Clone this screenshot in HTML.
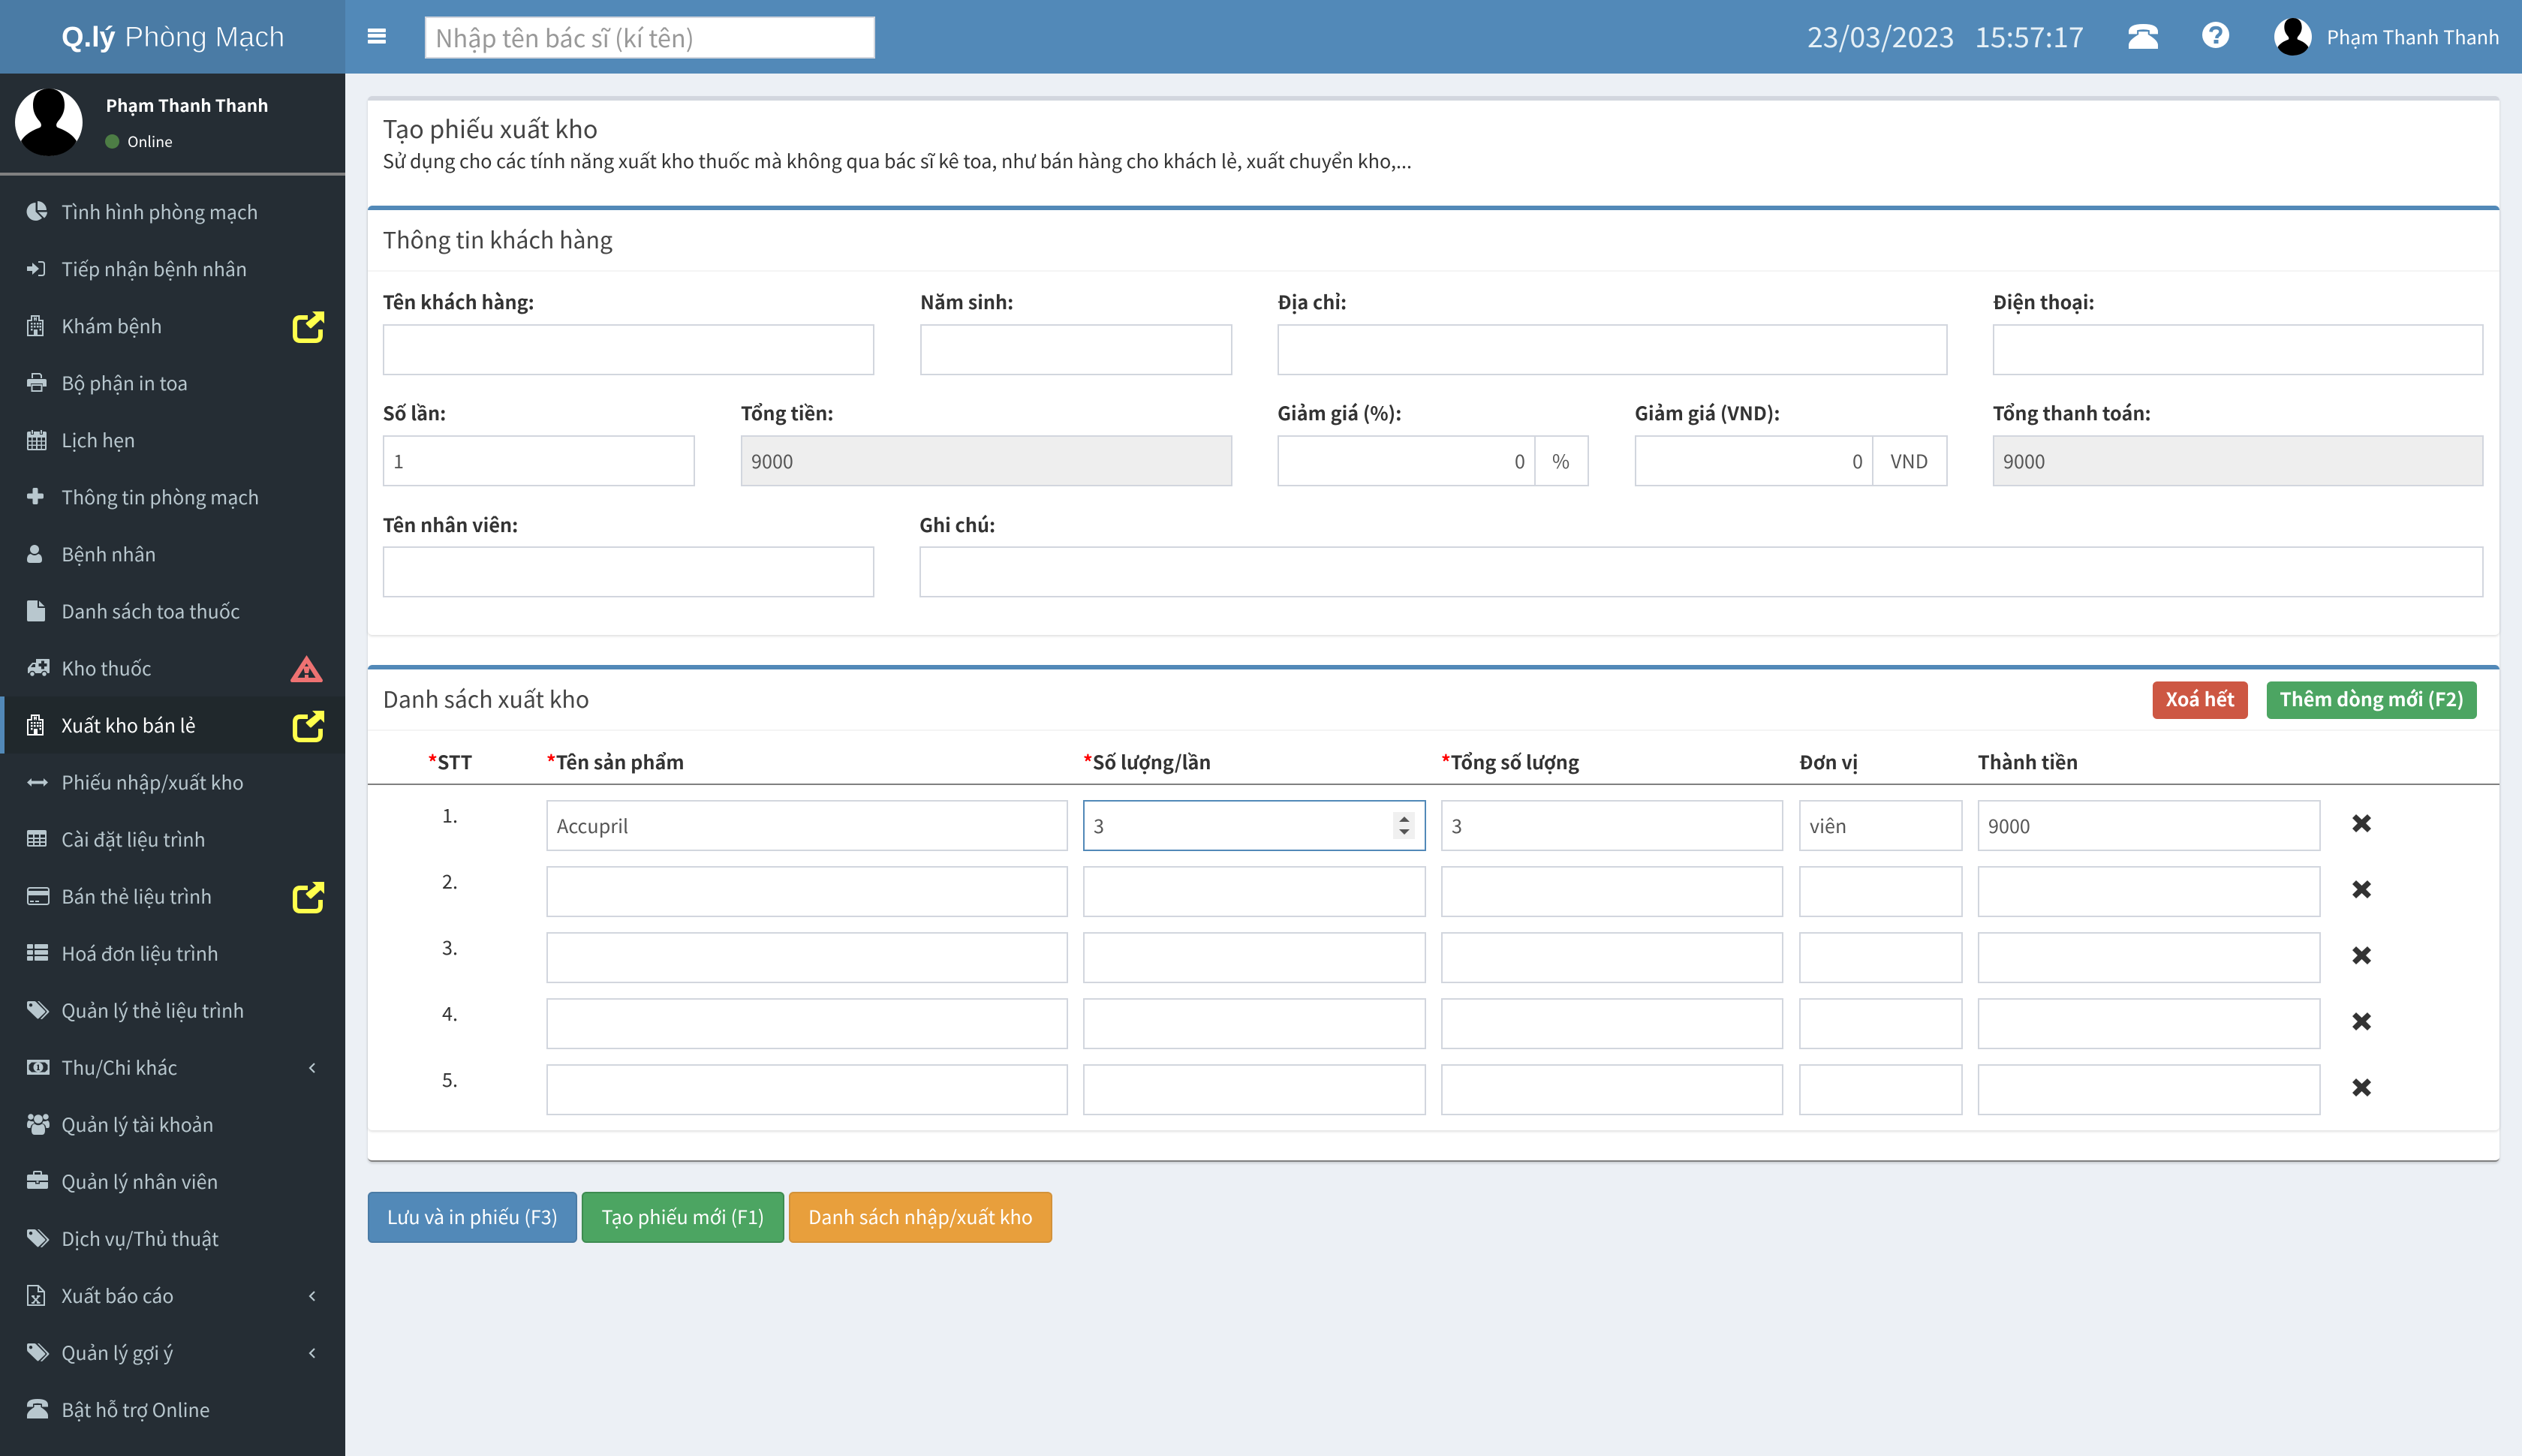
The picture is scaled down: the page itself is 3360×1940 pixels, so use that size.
<!DOCTYPE html>
<html lang="vi"><head><meta charset="utf-8"><title>Tạo phiếu xuất kho</title>
<style>
*{box-sizing:border-box}
html,body{margin:0;padding:0}
body{position:relative;width:3360px;height:1940px;overflow:hidden;background:#ecf0f5;font-family:"Noto Sans CJK SC","Noto Sans CJK JP","Liberation Sans",sans-serif;font-size:25.2px;color:#333}
.a,.t,.m,.in,.i,.btn{position:absolute}
.t{white-space:nowrap;line-height:0;height:0}
.m{left:82px;height:76px;line-height:76px;font-size:25px;color:#b8c7ce;white-space:nowrap}
.i{display:block;color:#b8c7ce;fill:currentColor;overflow:visible}
.in{height:68px;border:2px solid #d2d6de;background:#fff;color:#555;line-height:64px;padding:0 12px;white-space:nowrap}
.dis{background:#eee}
.lb{font-weight:700;color:#333;font-size:25.2px}
.h{font-size:32.5px;color:#444}
.h2{font-size:30.3px;color:#444}
.btn{border-radius:6px;color:#fff;text-align:center;white-space:nowrap}
.big{top:1588px;height:68px;line-height:62px;border-width:2px;border-style:solid}
.sm{top:908px;height:50px;line-height:46px;font-weight:700;font-size:25px}
.r{color:#f00;font-weight:700}
.c1{left:728px;width:695px}.c2{left:1443px;width:457px}.c3{left:1920px;width:456px}.c4{left:2397px;width:218px}.c5{left:2635px;width:457px}
</style></head><body>
<svg width="0" height="0" style="position:absolute"><defs>
<symbol id="share" viewBox="0 0 42 42"><path d="M20 8H10Q3 8 3 15V32Q3 39 10 39H30Q37 39 37 32V24" fill="none" stroke="#ffff4d" stroke-width="6"/><path d="M26 0H42V16L37 11L25 22Q24 23 23 22L18 17Q17 16 18 15L31 5Z" fill="#ffff4d"/></symbol>
<symbol id="tags" viewBox="0 0 30 24"><path fill-rule="evenodd" d="M2 0H10Q11 0 12 1L24 13Q25 14 24 15L15.5 23Q14.5 24 13.5 23L1 11Q0 10 0 8V2Q0 0 2 0ZM5 3A2.2 2.2 0 1 0 5 7.4A2.2 2.2 0 1 0 5 3Z"/><path d="M14 0H16L29 13Q30 14 29 15L20.5 23.5Q19 24.5 18 23.5L26 15Q27 14 26 13Z"/></symbol>
<symbol id="chev" viewBox="0 0 9 14"><path d="M8 1L2 7L8 13" fill="none" stroke="#b8c7ce" stroke-width="2.2"/></symbol>
<symbol id="ava" viewBox="0 0 90 90"><circle cx="45" cy="45" r="45" fill="#fff"/><path d="M45 0C30 0 24 10 24 22C24 32 28 38 33 44C36 48 35 51 33 52C25 55 14 60 8 70C15 83 30 90 45 90C60 90 75 83 82 70C76 60 65 55 57 52C55 51 54 48 57 44C62 38 66 32 66 22C66 10 60 0 45 0Z" fill="#000"/></symbol>
<symbol id="hosp" viewBox="0 0 22 28"><path d="M6 1H16V7H21V27H1V7H6Z" fill="none" stroke="currentColor" stroke-width="2"/><path d="M9 2.5H10.5V4H11.5V2.5H13V7.5H11.5V5.5H10.5V7.5H9ZM5 10H7.5V12.5H5ZM9 10H11.5V12.5H9ZM13 10H15.5V12.5H13ZM16.5 10H19V12.5H16.5ZM5 14H7.5V16.5H5ZM9 14H11.5V16.5H9ZM13 14H15.5V16.5H13ZM16.5 14H19V16.5H16.5ZM5 18H7.5V20.5H5ZM16.5 18H19V20.5H16.5ZM9 19H14V27H9Z" fill="currentColor"/></symbol>
<symbol id="phone" viewBox="0 0 28 26"><path d="M0 8Q0 0 14 0Q28 0 28 8V10.5H20V6.5Q14 5 8 6.5V10.5H0Z"/><path d="M9.5 8H18.5V11Q28 17 28 22V26H0V22Q0 17 9.5 11Z"/></symbol>
</defs></svg>

<!-- header -->
<div class="a" style="left:0;top:0;width:3360px;height:98px;background:#5289b8"></div>
<div class="a" style="left:0;top:0;width:460px;height:98px;background:#4a7ba5"></div>
<div class="t" style="left:82px;top:50px;font:700 38px 'Liberation Sans',sans-serif;color:#fff;line-height:0">Q.lý</div>
<div class="t" style="left:166px;top:50px;font:400 38px 'Liberation Sans',sans-serif;color:#fff;line-height:0;-webkit-text-stroke:.9px #4a7ba5">Phòng Mạch</div>
<div class="a" style="left:490px;top:38px;width:24px;height:5px;background:#fff;border-radius:1px"></div>
<div class="a" style="left:490px;top:45px;width:24px;height:5px;background:#fff;border-radius:1px"></div>
<div class="a" style="left:490px;top:53px;width:24px;height:5px;background:#fff;border-radius:1px"></div>
<div class="a" style="left:566px;top:22px;width:600px;height:56px;background:#fff;border:2px solid #d2d6de"></div>
<div class="t" style="left:580px;top:50px;font-size:32.5px;color:#999">Nhập tên bác sĩ (kí tên)</div>
<div class="t" style="left:2408px;top:47px;font-size:37.5px;color:#e6f0f6">23/03/2023</div>
<div class="t" style="left:2631px;top:47px;font-size:37.5px;color:#e6f0f6">15:57:17</div>
<svg class="i" style="left:2836px;top:32px;color:#fff" width="39" height="33" viewBox="0 0 28 26" preserveAspectRatio="none"><use href="#phone"/></svg>
<svg class="i" style="left:2934px;top:29px" width="36" height="35" viewBox="0 0 36 35"><ellipse cx="18" cy="17.5" rx="18" ry="17.5" fill="#fff"/><path d="M11.5 13.5Q12 8 18 8Q24.5 8 24.5 13Q24.5 16 21.5 18Q19.5 19.5 19.5 21V22" fill="none" stroke="#5289b8" stroke-width="4.5"/><rect x="15.5" y="24" width="6" height="5" fill="#5289b8"/></svg>
<svg class="i" style="left:3030px;top:24px" width="50" height="50" viewBox="0 0 90 90"><use href="#ava"/></svg>
<div class="t" style="left:3100px;top:49px;font-size:25.2px;color:#fff">Phạm Thanh Thanh</div>

<!-- sidebar -->
<div class="a" style="left:0;top:98px;width:460px;height:1842px;background:#252d34"></div>
<svg class="i" style="left:20px;top:118px" width="90" height="90" viewBox="0 0 90 90"><use href="#ava"/></svg>
<div class="t" style="left:141px;top:140px;font-size:22.6px;font-weight:700;color:#fff">Phạm Thanh Thanh</div>
<div class="a" style="left:140px;top:178.5px;width:19px;height:19px;border-radius:50%;background:#4d7d45"></div>
<div class="t" style="left:170px;top:187.5px;font-size:19.5px;color:#fff">Online</div>
<div class="a" style="left:0;top:230px;width:460px;height:4px;background:#808080"></div>
<div class="a" style="left:0;top:928px;width:460px;height:76px;background:#20282c"></div>
<div class="a" style="left:0;top:928px;width:6px;height:76px;background:#5289b8"></div>

<div class="m" style="top:244px">Tình hình phòng mạch</div>
<div class="m" style="top:320px">Tiếp nhận bệnh nhân</div>
<div class="m" style="top:396px">Khám bệnh</div>
<div class="m" style="top:472px">Bộ phận in toa</div>
<div class="m" style="top:548px">Lịch hẹn</div>
<div class="m" style="top:624px">Thông tin phòng mạch</div>
<div class="m" style="top:700px">Bệnh nhân</div>
<div class="m" style="top:776px">Danh sách toa thuốc</div>
<div class="m" style="top:852px">Kho thuốc</div>
<div class="m" style="top:928px;color:#fff">Xuất kho bán lẻ</div>
<div class="m" style="top:1004px">Phiếu nhập/xuất kho</div>
<div class="m" style="top:1080px">Cài đặt liệu trình</div>
<div class="m" style="top:1156px">Bán thẻ liệu trình</div>
<div class="m" style="top:1232px">Hoá đơn liệu trình</div>
<div class="m" style="top:1308px">Quản lý thẻ liệu trình</div>
<div class="m" style="top:1384px">Thu/Chi khác</div>
<div class="m" style="top:1460px">Quản lý tài khoản</div>
<div class="m" style="top:1536px">Quản lý nhân viên</div>
<div class="m" style="top:1612px">Dịch vụ/Thủ thuật</div>
<div class="m" style="top:1688px">Xuất báo cáo</div>
<div class="m" style="top:1764px">Quản lý gợi ý</div>
<div class="m" style="top:1840px">Bật hỗ trợ Online</div>

<svg class="i" style="left:36px;top:268px" width="27" height="26" viewBox="0 0 27 26"><path d="M11.5 2A12 12 0 1 0 20 22.5L11.5 14Z"/><path d="M14 0A12 12 0 0 1 26 12H14Z"/><path d="M15 14.5H27A12 12 0 0 1 23 22.5Z"/></svg>
<svg class="i" style="left:36px;top:348px" width="24" height="20" viewBox="0 0 24 20"><path d="M0 7H7V2L16 10L7 18V13H0Z"/><path d="M15 1H20Q23 1 23 4V16Q23 19 20 19H15" fill="none" stroke="currentColor" stroke-width="2"/></svg>
<svg class="i" style="left:36px;top:420px" width="22" height="28"><use href="#hosp"/></svg>
<svg class="i" style="left:36px;top:497px" width="26" height="25" viewBox="0 0 26 25"><path d="M2 8H24Q26 8 26 10V18H21V14H5V18H0V10Q0 8 2 8Z"/><path d="M7 7V1H17L19 3V7" fill="none" stroke="currentColor" stroke-width="2"/><rect x="6.5" y="16" width="13" height="8" fill="none" stroke="currentColor" stroke-width="2"/></svg>
<svg class="i" style="left:36px;top:572px" width="26" height="28" viewBox="0 0 26 28"><path d="M2 3H24Q26 3 26 5V26Q26 28 24 28H2Q0 28 0 26V5Q0 3 2 3Z"/><path fill="#252d34" d="M2 11H6V15H2ZM7.5 11H12V15H7.5ZM14 11H18.5V15H14ZM20 11H24V15H20ZM2 16.5H6V20.5H2ZM7.5 16.5H12V20.5H7.5ZM14 16.5H18.5V20.5H14ZM20 16.5H24V20.5H20ZM2 22H6V26H2ZM7.5 22H12V26H7.5ZM14 22H18.5V26H14ZM20 22H24V26H20ZM5 0H9V7H5ZM17 0H21V7H17Z"/><path d="M6 1H8V6H6ZM18 1H20V6H18Z"/></svg>
<svg class="i" style="left:36px;top:650px" width="22" height="22" viewBox="0 0 22 22"><rect x="7.5" width="7" height="22" rx="2"/><rect y="7.5" width="22" height="7" rx="2"/></svg>
<svg class="i" style="left:36px;top:726px" width="20" height="24" viewBox="0 0 20 24"><circle cx="10" cy="6" r="6"/><path d="M0 20Q0 13 5 12Q10 16 15 12Q20 13 20 20Q20 24 16 24H4Q0 24 0 20Z"/></svg>
<svg class="i" style="left:36px;top:800px" width="24" height="28" viewBox="0 0 24 28"><path d="M2 0H14V9Q14 10 15 10H24V26Q24 28 22 28H2Q0 28 0 26V2Q0 0 2 0Z"/><path d="M16 .5L23.5 8H16Z"/></svg>
<svg class="i" style="left:37px;top:878px" width="29" height="24" viewBox="0 0 29 24"><path d="M11 0H28Q29 0 29 1V18Q29 19 28 19H1Q0 19 0 18V12L6 5H11Z"/><path fill="#252d34" d="M18 2.5H22V6H25.5V10H22V13.5H18V10H14.5V6H18ZM4 11L7 7H10V11Z"/><circle cx="6" cy="20" r="3.5" stroke="#252d34" stroke-width="1.5"/><circle cx="22" cy="20" r="3.5" stroke="#252d34" stroke-width="1.5"/></svg>
<svg class="i" style="left:36px;top:952px;color:#fff" width="22" height="28"><use href="#hosp"/></svg>
<svg class="i" style="left:36px;top:1037px" width="28" height="11" viewBox="0 0 28 11"><path d="M0 5.5L6 0V3.5H22V0L28 5.5L22 11V7.5H6V11Z"/></svg>
<svg class="i" style="left:36px;top:1106px" width="26" height="22" viewBox="0 0 26 22"><path fill-rule="evenodd" d="M2 0H24Q26 0 26 2V20Q26 22 24 22H2Q0 22 0 20V2Q0 0 2 0ZM2 6V10H8V6ZM10 6V10H16V6ZM18 6V10H24V6ZM2 12V15H8V12ZM10 12V15H16V12ZM18 12V15H24V12ZM2 17V20H8V17ZM10 17V20H16V17ZM18 17V20H24V17Z"/></svg>
<svg class="i" style="left:36px;top:1182px" width="30" height="24" viewBox="0 0 30 24"><rect x="1" y="1" width="28" height="22" rx="2.5" fill="none" stroke="currentColor" stroke-width="2"/><path d="M1 5H29V11H1ZM4 18H9V20H4ZM11 18H16V20H11Z"/></svg>
<svg class="i" style="left:36px;top:1258px" width="28" height="22" viewBox="0 0 28 22"><rect width="8" height="6" rx="1"/><rect x="10" width="18" height="6" rx="1"/><rect y="8" width="8" height="6" rx="1"/><rect x="10" y="8" width="18" height="6" rx="1"/><rect y="16" width="8" height="6" rx="1"/><rect x="10" y="16" width="18" height="6" rx="1"/></svg>
<svg class="i" style="left:36px;top:1334px" width="30" height="24"><use href="#tags"/></svg>
<svg class="i" style="left:36px;top:1412px" width="30" height="20" viewBox="0 0 30 20"><path fill-rule="evenodd" d="M0 0H30V20H0ZM6 3.5L2.5 7V13L6 16.5H24L27.5 13V7L24 3.5Z"/><circle cx="15" cy="10" r="6.5"/><path fill="#252d34" d="M14 6.5H16V13H17V14H13V13H14V8H13Z"/></svg>
<svg class="i" style="left:36px;top:1484px" width="30" height="28" viewBox="0 0 30 28"><circle cx="5" cy="4" r="3.8"/><circle cx="25" cy="4" r="3.8"/><circle cx="15" cy="7" r="5.8"/><path d="M6 22Q6 14 10 13.5Q15 17 20 13.5Q24 14 24 22Q24 28 20 28H10Q6 28 6 22Z"/><path d="M0 15Q0 9 3 9Q5 10.5 8.5 10Q9 12 10 12.5Q5 14 4.5 19H2Q0 19 0 15ZM30 15Q30 9 27 9Q25 10.5 21.5 10Q21 12 20 12.5Q25 14 25.5 19H28Q30 19 30 15Z"/></svg>
<svg class="i" style="left:36px;top:1560px" width="28" height="24" viewBox="0 0 28 24"><path d="M9 5V2Q9 1 10 1H18Q19 1 19 2V5" fill="none" stroke="currentColor" stroke-width="2"/><path d="M2 5H26Q28 5 28 7V13H0V7Q0 5 2 5Z"/><path d="M0 15H11V17.5H17V15H28V22Q28 24 26 24H2Q0 24 0 22ZM12.5 13.5H15.5V16H12.5Z"/></svg>
<svg class="i" style="left:36px;top:1638px" width="30" height="24"><use href="#tags"/></svg>
<svg class="i" style="left:36px;top:1712px" width="24" height="28" viewBox="0 0 24 28"><path d="M1 1H15L23 9V27H1ZM15 1V9H23" fill="none" stroke="currentColor" stroke-width="2"/><path d="M7 15L16 24M16 15L8 24M6 15H10M13 15H17.5M6 24H10M13 24H17.5" fill="none" stroke="currentColor" stroke-width="2"/></svg>
<svg class="i" style="left:36px;top:1790px" width="30" height="24"><use href="#tags"/></svg>
<svg class="i" style="left:36px;top:1864px" width="28" height="26"><use href="#phone"/></svg>

<svg class="i" style="left:390px;top:415px" width="42" height="42"><use href="#share"/></svg>
<svg class="i" style="left:390px;top:947px" width="42" height="42"><use href="#share"/></svg>
<svg class="i" style="left:390px;top:1175px" width="42" height="42"><use href="#share"/></svg>
<svg class="i" style="left:387px;top:873px" width="43" height="36" viewBox="0 0 43 36"><path fill="#ee7272" fill-rule="evenodd" d="M21.5 0L43 33Q43 36 41 36H2Q0 36 0 33ZM21.5 11L9.5 30H33.5Z"/><path fill="#ee7272" d="M17 15H26L24 24H19ZM19 26H24V31H19Z"/></svg>
<svg class="i" style="left:411px;top:1416px" width="9" height="14"><use href="#chev"/></svg>
<svg class="i" style="left:411px;top:1720px" width="9" height="14"><use href="#chev"/></svg>
<svg class="i" style="left:411px;top:1796px" width="9" height="14"><use href="#chev"/></svg>

<!-- main boxes -->
<div class="a" style="left:490px;top:128px;width:2840px;height:1420px;background:#fff;border-top:6px solid #d2d6de;border-bottom:2px solid #808080;border-radius:6px;box-shadow:0 2px 3px rgba(0,0,0,.15)"></div>
<div class="a" style="left:490px;top:274px;width:2840px;height:572px;background:#fff;border-top:6px solid #5289b8;border-radius:6px;box-shadow:0 2px 3px rgba(0,0,0,.12)"></div>
<div class="a" style="left:490px;top:886px;width:2840px;height:620px;background:#fff;border-top:6px solid #5289b8;border-radius:6px;box-shadow:0 2px 3px rgba(0,0,0,.12)"></div>
<div class="a" style="left:490px;top:360px;width:2840px;height:2px;background:#f4f4f4"></div>
<div class="a" style="left:490px;top:972px;width:2840px;height:2px;background:#f4f4f4"></div>
<div class="a" style="left:490px;top:1044px;width:2840px;height:2px;background:#808080"></div>

<div class="t h" style="left:510px;top:171px">Tạo phiếu xuất kho</div>
<div class="t" style="left:510px;top:214px;color:#333">Sử dụng cho các tính năng xuất kho thuốc mà không qua bác sĩ kê toa, như bán hàng cho khách lẻ, xuất chuyển kho,...</div>
<div class="t h2" style="left:510px;top:318px">Thông tin khách hàng</div>

<div class="t lb" style="left:510px;top:402px">Tên khách hàng:</div>
<div class="t lb" style="left:1226px;top:402px">Năm sinh:</div>
<div class="t lb" style="left:1702px;top:402px">Địa chỉ:</div>
<div class="t lb" style="left:2655px;top:402px">Điện thoại:</div>
<div class="in" style="left:510px;top:432px;width:655px"></div>
<div class="in" style="left:1226px;top:432px;width:416px"></div>
<div class="in" style="left:1702px;top:432px;width:893px"></div>
<div class="in" style="left:2655px;top:432px;width:654px"></div>

<div class="t lb" style="left:510px;top:550px">Số lần:</div>
<div class="t lb" style="left:987px;top:550px">Tổng tiền:</div>
<div class="t lb" style="left:1702px;top:550px">Giảm giá (%):</div>
<div class="t lb" style="left:2178px;top:550px">Giảm giá (VND):</div>
<div class="t lb" style="left:2655px;top:550px">Tổng thanh toán:</div>
<div class="in" style="left:510px;top:580px;width:416px">1</div>
<div class="in dis" style="left:987px;top:580px;width:655px">9000</div>
<div class="in" style="left:1702px;top:580px;width:344px;text-align:right">0</div>
<div class="in" style="left:2044px;top:580px;width:73px;border-left-width:2px;padding:0 0 0 22px">%</div>
<div class="in" style="left:2178px;top:580px;width:318px;text-align:right">0</div>
<div class="in" style="left:2494px;top:580px;width:101px;padding:0 0 0 23px">VND</div>
<div class="in dis" style="left:2655px;top:580px;width:654px">9000</div>

<div class="t lb" style="left:510px;top:699px">Tên nhân viên:</div>
<div class="t lb" style="left:1225px;top:699px">Ghi chú:</div>
<div class="in" style="left:510px;top:728px;width:655px"></div>
<div class="in" style="left:1225px;top:728px;width:2084px"></div>

<div class="t h2" style="left:510px;top:930px">Danh sách xuất kho</div>
<div class="btn sm" style="left:2868px;width:127px;background:#cd5743">Xoá hết</div>
<div class="btn sm" style="left:3020px;width:280px;background:#4ca562">Thêm dòng mới (F2)</div>

<div class="t lb" style="left:570px;top:1015px"><span class="r">*</span>STT</div>
<div class="t lb" style="left:728px;top:1015px"><span class="r">*</span>Tên sản phẩm</div>
<div class="t lb" style="left:1443px;top:1015px"><span class="r">*</span>Số lượng/lần</div>
<div class="t lb" style="left:1920px;top:1015px"><span class="r">*</span>Tổng số lượng</div>
<div class="t lb" style="left:2397px;top:1015px">Đơn vị</div>
<div class="t lb" style="left:2635px;top:1015px">Thành tiền</div>

<div class="t" style="left:589px;top:1086px">1.</div>
<div class="t" style="left:589px;top:1174px">2.</div>
<div class="t" style="left:589px;top:1262px">3.</div>
<div class="t" style="left:589px;top:1350px">4.</div>
<div class="t" style="left:589px;top:1438px">5.</div>

<div class="in c1" style="top:1066px">Accupril</div><div class="in c2" style="top:1066px;border-color:#5289b8">3</div><div class="in c3" style="top:1066px">3</div><div class="in c4" style="top:1066px">viên</div><div class="in c5" style="top:1066px">9000</div>
<div class="in c1" style="top:1154px"></div><div class="in c2" style="top:1154px"></div><div class="in c3" style="top:1154px"></div><div class="in c4" style="top:1154px"></div><div class="in c5" style="top:1154px"></div>
<div class="in c1" style="top:1242px"></div><div class="in c2" style="top:1242px"></div><div class="in c3" style="top:1242px"></div><div class="in c4" style="top:1242px"></div><div class="in c5" style="top:1242px"></div>
<div class="in c1" style="top:1330px"></div><div class="in c2" style="top:1330px"></div><div class="in c3" style="top:1330px"></div><div class="in c4" style="top:1330px"></div><div class="in c5" style="top:1330px"></div>
<div class="in c1" style="top:1418px"></div><div class="in c2" style="top:1418px"></div><div class="in c3" style="top:1418px"></div><div class="in c4" style="top:1418px"></div><div class="in c5" style="top:1418px"></div>

<svg class="i" style="left:1856px;top:1082px" width="29" height="36" viewBox="0 0 29 36"><rect width="29" height="36" fill="#f0f0f0"/><path d="M15 6L22 13H8ZM8 23H22L15 30Z" fill="#555"/></svg>

<svg class="i" style="left:3134px;top:1085px;color:#333" width="25" height="24" viewBox="0 0 25 24"><path d="M5 0L12.5 7L20 0L25 5L18 12L25 19L20 24L12.5 17L5 24L0 19L7 12L0 5Z"/></svg>
<svg class="i" style="left:3134px;top:1173px;color:#333" width="25" height="24" viewBox="0 0 25 24"><path d="M5 0L12.5 7L20 0L25 5L18 12L25 19L20 24L12.5 17L5 24L0 19L7 12L0 5Z"/></svg>
<svg class="i" style="left:3134px;top:1261px;color:#333" width="25" height="24" viewBox="0 0 25 24"><path d="M5 0L12.5 7L20 0L25 5L18 12L25 19L20 24L12.5 17L5 24L0 19L7 12L0 5Z"/></svg>
<svg class="i" style="left:3134px;top:1349px;color:#333" width="25" height="24" viewBox="0 0 25 24"><path d="M5 0L12.5 7L20 0L25 5L18 12L25 19L20 24L12.5 17L5 24L0 19L7 12L0 5Z"/></svg>
<svg class="i" style="left:3134px;top:1437px;color:#333" width="25" height="24" viewBox="0 0 25 24"><path d="M5 0L12.5 7L20 0L25 5L18 12L25 19L20 24L12.5 17L5 24L0 19L7 12L0 5Z"/></svg>

<div class="btn big" style="left:490px;width:279px;background:#5289b8;border-color:#4a7ba5">Lưu và in phiếu (F3)</div>
<div class="btn big" style="left:775px;width:270px;background:#4ca562;border-color:#3d8b50">Tạo phiếu mới (F1)</div>
<div class="btn big" style="left:1051px;width:351px;background:#e89f3c;border-color:#d3923a">Danh sách nhập/xuất kho</div>
</body></html>
